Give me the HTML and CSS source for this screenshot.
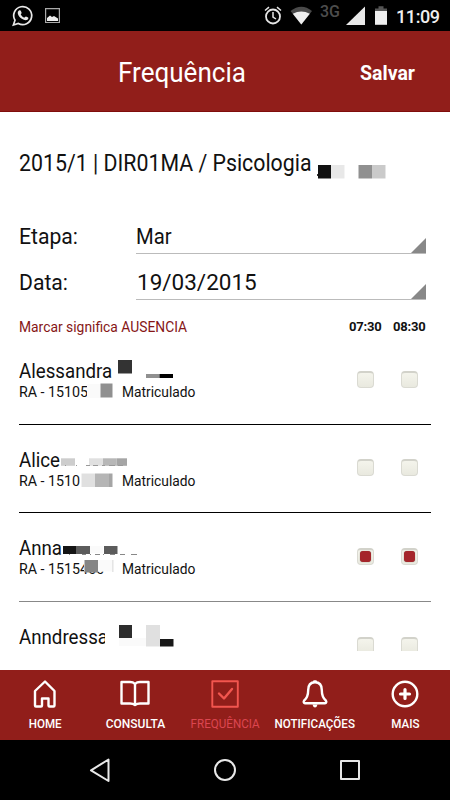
FILE: index.html
```html
<!DOCTYPE html>
<html lang="pt-BR">
<head>
<meta charset="utf-8">
<title>Frequência</title>
<link rel="stylesheet" href="styles.css">
</head>
<body>
<div class="status">
  <svg class="status-left" width="70" height="31" viewBox="0 0 70 31">
    <path d="M13.400 25 15 20.200A9 9 0 1 1 18.300 23.400Z" fill="none" stroke="#e8e8e8" stroke-width="1.7"/>
    <path d="M19 10.6c.8-.7 1.5-.5 1.8.2l.8 1.9c.2.6-.9 1.3-.8 1.7.8 1.6 2 2.6 3.5 3.2.5.1 1.1-1.3 1.7-1.1l2.1 1c.7.4.1 1.8-.7 2.3-1.5.9-3.6.3-5.6-1-2-1.4-3.6-3.4-4-5.4-.2-1.2.3-2.2 1.2-2.8Z" fill="#e8e8e8"/>
    <path d="M45.600 8.700h13.800v13.800H45.600z" fill="none" stroke="#aaa" stroke-width="1.200"/>
    <path d="M47 21v-3l3-2.500 2 1.500 2-1 4 2.500V21z" fill="#eee"/>
  </svg>
  <svg class="status-right" width="130" height="31" viewBox="0 0 130 31">
    <circle cx="10" cy="16.500" r="7" fill="none" stroke="#e5e5e5" stroke-width="1.800"/>
    <path d="M10 12v5l3 2M2 10.500l4-3.300M18 10.500l-4-3.300" fill="none" stroke="#e5e5e5" stroke-width="1.500"/>
    <path d="M27.500 11Q38.500 2.500 49 11L38.300 24.500Z" fill="#4a4a4a"/>
    <path d="M29.800 13.800Q38.300 9 46.800 13.800L38.300 24.500Z" fill="#eee"/>
    <path d="M83 25h19V6.500z" fill="#e8e8e8"/>
    <path d="M112 8.500h3.500V6.300h5V8.500h3.500V13h-12z" fill="#555"/>
    <path d="M112 11h12v13.800h-12z" fill="#eee"/>
  </svg>
  <span class="network">3G</span>
  <span class="clock">11:09</span>
</div>
<header class="header">
  <span></span>
  <h1 class="title">Frequência</h1>
  <span class="save">Salvar</span>
</header>
<main class="content">
  <div class="course"><span>2015/1 | DIR01MA / Psicologia</span>
    <svg class="mask mask-course" width="72" height="18"><path fill="#333" d="M1 12h1v2H1z"/><path fill="#111" d="M2 3h13v13.500H2z"/><path fill="#e8e8e8" d="M15 3h13.500v13.500H15z"/><path fill="#909090" d="M42.500 3H56v13.500H42.500z"/><path fill="#cacaca" d="M56 3h13.500v13.500H56z"/></svg>
  </div>
  <div class="field"><span class="label">Etapa:</span><span class="select"><span class="month">Mar</span><svg width="15" height="15"><path d="M0 15H15V0z"/></svg></span></div>
  <div class="field"><span class="label">Data:</span><span class="select"><span class="date">19/03/2015</span><svg width="15" height="15"><path d="M0 15H15V0z"/></svg></span></div>
  <div class="legend"><span class="hint">Marcar significa AUSENCIA</span><span class="hour">07:30</span><span class="hour">08:30</span></div>
  <div class="list">
    <div class="row">
      <div class="student"><div class="name">Alessandra</div><div class="info"><span class="ra">RA - 15105</span><span class="state">Matriculado</span></div>
        <svg class="mask mask-student" width="160" height="60"><path fill="#fff" d="M68 29h31v20H68z"/><path fill="#fafafa" d="M68 29h14v14H68z"/><path fill="#909090" d="M81.500 28.500H93.500V42.500H81.500z"/><path fill="#333" d="M99 5h14v13.500H99z"/><path fill="#909090" d="M127 19h13.500v4H127z"/><path fill="#000" d="M140.500 19H154v4h-13.500z"/></svg>
      </div>
      <i class="check"></i><i class="check"></i>
    </div>
    <div class="row">
      <div class="student"><div class="name">Alice</div><div class="info"><span class="ra">RA - 1510</span><span class="state">Matriculado</span></div>
        <svg class="mask mask-student" width="160" height="60"><path fill="#cdcdcd" d="M42 14.300h14v7.500H42z"/><path fill="#e0e0e0" d="M70 14.300h14v7.500H70z"/><path fill="#b7b7b7" d="M84 14.300h13.500v7.500H84z"/><path fill="#a5a5a5" d="M97.500 14.300H108v7.500H97.500z"/><path d="M46 21.500h1m10 0h1m9 0h4m3 0h5m4 0h3m4 0h6m3 0h5" stroke="#999"/><path fill="#e0e0e0" d="M62.500 29.500H76V43H62.500z"/><path fill="#b5b5b5" d="M76 29.500h14V43H76z"/><path fill="#a5a5a5" d="M90 29.500h3.500V43H90z"/></svg>
      </div>
      <i class="check"></i><i class="check"></i>
    </div>
    <div class="row soft">
      <div class="student"><div class="name">Anna</div><div class="info"><span class="ra">RA - 1515400</span><span class="state">Matriculado</span></div>
        <svg class="mask mask-student" width="160" height="60"><path fill="#151515" d="M44 14h13v8H44z"/><path fill="#5c5c5c" d="M57 14h14v8H57z"/><path fill="#fafafa" d="M71 14h13v7H71z"/><path fill="#5c5c5c" d="M85 14h13.500v8H85z"/><path d="M50 22.500h1m12 0h4m4 0h1m4 0h5m3 0h1m6 0h5m5 0h5m6 0h6" stroke="#888"/><path fill="#fff" d="M65 26h30v13.500H65z"/><path fill="#858585" d="M65.500 28H79v12.500H65.500z"/><path fill="#fafafa" d="M79 28h14v11.500H79z"/><path fill="#ccc" d="M93.500 28h.8v12h-.8z"/></svg>
      </div>
      <i class="check on"></i><i class="check on"></i>
    </div>
    <div class="row">
      <div class="student"><div class="name">Anndressa</div>
        <svg class="mask mask-student" width="160" height="60"><path fill="#fff" d="M86 5h13v20H86z"/><path fill="#2d2d2d" d="M100 4h13v13h-13z"/><path fill="#fafafa" d="M100 17h27v8h-27z"/><path fill="#e0e0e0" d="M127 4h14v21.500h-14z"/><path fill="#181818" d="M141 18h13.500v7.500H141z"/></svg>
      </div>
      <i class="check"></i><i class="check"></i>
    </div>
  </div>
</main>
<nav class="tabs">
  <div class="tab"><svg width="30" height="30" viewBox="0 0 30 30"><path d="M15 2.500 24.500 12v14.500q0 1-1 1H19.500q-1 0-1-1V19.500h-6.500V26.500q0 1-1 1H6q-1 0-1-1V12Z"/></svg><span>HOME</span></div>
  <div class="tab"><svg width="32" height="30" viewBox="0 0 32 30"><path d="M16 4.800Q14 3 11 3H2.500v21.500H11q3 0 5 1.500 2-1.500 5-1.500h8.500V3H21q-3 0-5 1.800V26"/></svg><span class="wide">CONSULTA</span></div>
  <div class="tab active"><svg width="30" height="30" viewBox="0 0 30 30"><path d="M2.300 2.300h25.500v25.500H2.300z" stroke-width="1.900"/><path d="m9 14.500 5 5 8-9.500"/></svg><span>FREQUÊNCIA</span></div>
  <div class="tab"><svg width="30" height="30" viewBox="0 0 30 30"><path d="M15 3.200C10 3.200 8.200 7 8.200 11c0 6-2 8.800-4 10.500-1 1.200-.4 2.700.8 2.700h20c1.200 0 1.800-1.500.8-2.700-2-1.700-4-4.500-4-10.500 0-4-1.800-7.800-6.800-7.800Z"/><path d="M14.200 2.500h1.600" /><path d="M12.500 25.500h5q-.7 3-2.500 3t-2.500-3Z" class="solid"/></svg><span>NOTIFICAÇÕES</span></div>
  <div class="tab"><svg width="30" height="30" viewBox="0 0 30 30"><circle cx="15" cy="15" r="12.300"/><path d="M15 10.500v9M10.500 15h9" stroke-width="3.200"/></svg><span>MAIS</span></div>
</nav>
<footer class="system">
  <svg width="24" height="28" viewBox="0 0 24 28"><path d="M20.500 3.500v21.500L3 14.300Z"/></svg>
  <svg width="24" height="28" viewBox="0 0 24 28"><circle cx="12" cy="14" r="10"/></svg>
  <svg width="24" height="28" viewBox="0 0 24 28"><path d="M3 5h18v18H3z"/></svg>
</footer>
</body>
</html>
```
FILE: styles.css
```css
* { box-sizing: border-box; }
body {
  margin: 0;
  width: 450px;
  height: 800px;
  overflow: hidden;
  display: flex;
  flex-direction: column;
  background: #fff;
  color: #111;
  font-family: Roboto, "Liberation Sans", sans-serif;
  white-space: nowrap;
}
.status {
  position: relative;
  height: 31px;
  flex: none;
  display: flex;
  justify-content: space-between;
  padding: 0 10px 0 0;
  background: #000;
}
.status-left { flex: none; }
.status-right { flex: none; margin-left: 190px; }
.network {
  position: absolute;
  left: 320px;
  top: 3px;
  color: #4d4d4d;
  font-size: 16px;
  font-weight: 500;
  line-height: 18px;
}
.clock {
  color: #eee;
  font-size: 18px;
  font-weight: 500;
  line-height: 33px;
  width: 44px;
  letter-spacing: -.4px;
}
.header {
  height: 81px;
  flex: none;
  display: grid;
  grid-template-columns: 118px 242px 1fr;
  align-items: center;
  padding-top: 3px;
  background: #911e1a;
  border-bottom: 1px solid #800d0c;
  color: #fff;
}
.title {
  margin: 0;
  font-size: 28px;
  font-weight: 400;
  line-height: 36px;
  transform: scaleX(.93);
  transform-origin: left;
}
.save {
  font-size: 21px;
  font-weight: 700;
  transform: scaleX(.93);
  transform-origin: left;
}
.content {
  height: 539px;
  overflow: hidden;
  padding: 0 19px;
  flex: none;
}
.content + .tabs { margin-top: 19px; }
.course {
  position: relative;
  height: 102px;
  padding-top: 37px;
  font-size: 23px;
  line-height: 30px;
}
.course span {
  display: inline-block;
  transform: scaleX(.927);
  transform-origin: left;
}
.mask { position: absolute; }
.mask-course { left: 297px; top: 50px; }
.mask-student { left: 0; top: 0; }
.field {
  display: grid;
  grid-template-columns: 117px 290px;
  height: 46px;
  font-size: 22.5px;
  line-height: 45px;
}
.label {
  transform: scaleX(.94);
  transform-origin: left;
}
.select {
  display: flex;
  justify-content: space-between;
  align-items: flex-end;
  height: 40px;
  line-height: 34px;
  border-bottom: 1px solid #bbb;
}
.select svg { flex: none; fill: #888; }
.month, .date { display: inline-block; transform-origin: left; }
.month { transform: scaleX(.9); }
.date { transform: translateX(1px); }
.legend {
  display: flex;
  height: 30px;
  line-height: 42px;
  font-size: 13px;
  gap: 11px;
}
.hint {
  width: 319px;
  color: #861616;
  font-size: 14.5px;
  line-height: 43px;
  transform: scaleX(.955);
  transform-origin: left;
}
.hour {
  width: 33px;
  font-weight: 700;
  letter-spacing: -.2px;
}
.row {
  display: flex;
  height: 88.7px;
  border-bottom: 1px solid #000;
  padding-top: 19px;
}
.row.soft { border-color: #888; }
.student {
  position: relative;
  flex: none;
  width: 338px;
}
.name {
  height: 29px;
  font-size: 20px;
  line-height: 33px;
  transform: scaleX(.935);
  transform-origin: left;
}
.info {
  display: grid;
  grid-template-columns: 103px 1fr;
  font-size: 15px;
  line-height: 16px;
}
.ra, .state {
  transform: scaleX(.92);
  transform-origin: left;
}
.ra { transform: scaleX(.95); }
.check {
  flex: none;
  display: grid;
  place-items: center;
  width: 17px;
  height: 17px;
  margin: 15.500px 26.500px 0 0;
  border: 1px solid #dadad2;
  border-top: 2px solid #d2d2ca;
  border-radius: 4px;
  background: linear-gradient(#f4f4ec, #e9e9df);
}
.on::before {
  content: "";
  width: 11px;
  height: 11px;
  border-radius: 3px;
  background: #a5252b;
  box-shadow: 0 0 1px #765;
}
.tabs {
  display: grid;
  grid-template-columns: repeat(5, 90px);
  height: 70px;
  flex: none;
  background: #911e1a;
  color: #fff;
}
.tab {
  display: flex;
  flex-direction: column;
  align-items: center;
  padding-top: 9px;
  font-size: 13.5px;
  font-weight: 500;
  line-height: 29px;
}
.tab svg, .system svg {
  flex: none;
  fill: none;
  stroke: currentColor;
  stroke-width: 2.4;
  stroke-linejoin: round;
  stroke-linecap: round;
}
.tab .solid { fill: currentColor; stroke: none; }
.tab span { transform: scaleX(.86); }
.tab .wide { transform: scaleX(.89); }
.active { color: #f2564f; }
.active span { color: #dc4650; font-weight: 400; }
.system {
  height: 60px;
  flex: none;
  display: flex;
  align-items: center;
  justify-content: space-between;
  padding: 0 88px;
  background: #000;
  color: #e8e8e8;
}
.system svg { stroke-width: 2; }
```
